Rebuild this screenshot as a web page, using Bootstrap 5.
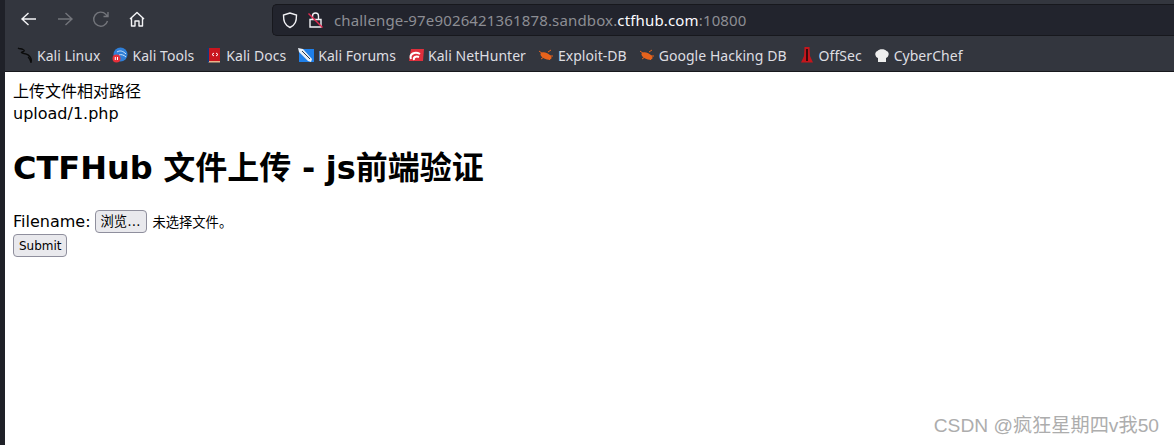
<!DOCTYPE html>
<html lang="zh">
<head>
<meta charset="utf-8">
<title>CTFHub 文件上传 - js前端验证</title>
<link href="https://cdn.jsdelivr.net/npm/bootstrap@5.3.0/dist/css/bootstrap.min.css" rel="stylesheet">
<style>
html,body{height:445px;overflow:hidden;background:#fff}
.shell{height:445px}
.edge{width:5px;background:#1f2128;flex:none}
.mainpane{min-width:0}
.chrome{background:#33363e;height:72px;border-bottom:1px solid #17181d;font-family:"Noto Sans","Noto Sans CJK SC",sans-serif}
.toolrow{height:41px;padding-top:4px}
.navset{width:267px;padding-left:14px;gap:16px;flex:none}
.navbtn{width:20px;height:20px;display:block;flex:none}
.urlbox{height:32px;margin-top:0;background:#22242d;border:1px solid #17181d;border-right:0;border-radius:5px 0 0 5px;padding-left:8px;font-size:15px;color:#8d8e94;white-space:nowrap;letter-spacing:.15px}
.urlbox b{font-weight:400;color:#fbfbfe}
.urlico{flex:none}
.urltext{margin-left:2px}
.markrow{height:28px;padding-left:12px;gap:12px;color:#dedee2;font-size:14px;white-space:nowrap;letter-spacing:.04px}
.markitem{gap:4px}
.markitem svg{flex:none;display:block;width:16px}
.pagebody{padding:8px;font-family:"DejaVu Sans","Noto Sans CJK SC",sans-serif;color:#000;font-size:16px;line-height:19px;position:relative;flex:1}
.pathlabel{font-family:"Noto Sans CJK SC",sans-serif;font-size:16px;line-height:20px;height:23px}
.pathvalue{font-size:16px;line-height:21px;height:21px}
.headline{font-family:"DejaVu Sans","Noto Sans CJK SC",sans-serif;font-weight:700;font-size:32px;line-height:38px;margin:25px 0 23px;color:#000;word-spacing:-.5px}
.fileline{height:23px;margin-bottom:1px;font-size:16px;gap:4px}
.fakebtn{font-family:"DejaVu Sans","Noto Sans CJK SC",sans-serif;font-size:13.3px;line-height:15px;color:#000;background:#e9e9ed;border:1px solid #8f8f9d;border-radius:4px;padding:3px 6px 3px 5px;height:23px}
.nofile{font-family:"Noto Sans CJK SC",sans-serif;font-size:13.3px;margin-left:1px}
.sendbtn{font-size:12px;padding:3px 5px 2px 5px;display:block;width:54px}
.watermark{position:absolute;right:15px;bottom:8px;font-family:"Liberation Sans","Noto Sans CJK SC",sans-serif;font-size:19.2px;line-height:22px;color:#adadad;white-space:nowrap}
</style>
</head>
<body>
<div class="shell d-flex">
  <div class="edge"></div>
  <div class="mainpane flex-grow-1 d-flex flex-column">
    <div class="chrome">
      <div class="toolrow d-flex">
        <div class="navset d-flex align-items-center pb-2">
          <svg class="navbtn" viewBox="0 0 20 20" fill="none" stroke="#f4f4f6" stroke-width="1.4"><path d="M17 10H3M9.500 4 3 10l6.500 6"/></svg>
          <svg class="navbtn" viewBox="0 0 20 20" fill="none" stroke="#73757b" stroke-width="1.4"><path d="M3 10h14M10.500 4 17 10l-6.500 6"/></svg>
          <svg class="navbtn" viewBox="0 0 20 20" fill="none" stroke="#73757b" stroke-width="1.400"><path d="M16.500 12a7 7 0 1 1-1.600-6.600L17 7.500M17 3v4.500h-4.500"/></svg>
          <svg class="navbtn" viewBox="0 0 20 20" fill="none" stroke="#f4f4f6" stroke-width="1.400" stroke-linejoin="round"><path d="M3 10 10 3.500 17 10M4.500 8.500V17h3.500v-5h4v5h3.500V8.500"/></svg>
        </div>
        <div class="urlbox flex-grow-1 d-flex align-items-center gap-2">
          <svg class="urlico" width="18" height="18" viewBox="0 0 18 18" fill="none" stroke="#f0f0f3" stroke-width="1.400"><path d="M9 2 2.500 4c0 6 1 10 6.500 12.500C14.500 14 15.500 10 15.500 4z"/></svg>
          <svg class="urlico" width="17" height="18" viewBox="0 0 17 18" fill="none" stroke="#f0f0f3" stroke-width="1.400"><path d="M5.500 8V5a3 3 0 0 1 6 0v3M3 8.500h11v7.500H3z"/><path d="M1.500 2.500 15.500 16.500" stroke="#e22850"/></svg>
          <span class="urltext">challenge-97e9026421361878.sandbox.<b>ctfhub.com</b>:10800</span>
        </div>
      </div>
      <div class="markrow d-flex align-items-center">
        <span class="markitem d-flex align-items-center">
          <svg height="16" viewBox="0 0 16 16" fill="none" stroke="#0b0b0b" stroke-width="1.300"><path d="M1 1c2 1.500 3 0 5 1.500 2 1 1.500 2-1 2.500-1.500.5 0 1 2 1.500 3 .5 6 2.500 7 5 .5 1.500.5 2.500 0 4-.5-2-1-4-3-5.500"/></svg>
          <span>Kali Linux</span>
        </span>
        <span class="markitem d-flex align-items-center">
          <svg height="16" viewBox="0 0 16 16"><circle cx="8.500" cy="7.500" r="7" fill="#2f7fd8"/><path d="M5 5c3-2 6-1 9 2M7 8c2-1 5 0 7 2" stroke="#cfe4fa" fill="none"/><circle cx="4.500" cy="11.500" r="4" fill="#e8303a"/><path d="M3.300 10v3M5.500 10v3" stroke="#fff"/></svg>
          <span>Kali Tools</span>
        </span>
        <span class="markitem d-flex align-items-center">
          <svg height="16" viewBox="0 0 16 16"><path d="M2 1h12v13H2z" fill="#c9151e"/><path d="M2 14h12v1.500H2z" fill="#e8b48a"/><path d="M1.500 1H3v14.500H1.500z" fill="#123a7a"/><path d="M6 7.500 8 6M6 7.500 8 9M12 7.500 10 6M12 7.500 10 9" stroke="#fff"/></svg>
          <span>Kali Docs</span>
        </span>
        <span class="markitem d-flex align-items-center">
          <svg height="16" viewBox="0 0 16 16"><path d="M1 2h15v13H1z" fill="#1f7fe8"/><path d="M0 1 5 2l9 10-1 3-3-1L1 5z" fill="#e8eef5"/><path d="M4 4l8 8" stroke="#26364a"/></svg>
          <span>Kali Forums</span>
        </span>
        <span class="markitem d-flex align-items-center">
          <svg height="16" viewBox="0 0 16 16"><path d="M3 2h13l-1 12H1z" fill="#df2f3c"/><path d="M3 12c-2-5 4-8 9-5M6 13c-1-3 2-4 5-3" stroke="#fff" stroke-width="2" fill="none"/></svg>
          <span>Kali NetHunter</span>
        </span>
        <span class="markitem d-flex align-items-center">
          <svg height="16" viewBox="0 0 16 16"><ellipse cx="8" cy="9" rx="6" ry="3" transform="rotate(25 8 9)" fill="#e8631c"/><path d="M1 4 5 7M3 12l3-2M10 5l3-2M12 13l-2-2M15 9h-3" stroke="#e8631c"/></svg>
          <span>Exploit-DB</span>
        </span>
        <span class="markitem d-flex align-items-center">
          <svg height="16" viewBox="0 0 16 16"><ellipse cx="8" cy="9" rx="6" ry="3" transform="rotate(25 8 9)" fill="#e8631c"/><path d="M1 4 5 7M3 12l3-2M10 5l3-2M12 13l-2-2M15 9h-3" stroke="#e8631c"/></svg>
          <span>Google Hacking DB</span>
        </span>
        <span class="markitem d-flex align-items-center">
          <svg height="18" viewBox="0 0 16 18"><path d="M5.500 1h5l.5 9 3 6.500H2l3-6.500z" fill="#c4161c"/><path d="M7 3h2v12H7z" fill="#3a0a0c"/></svg>
          <span>OffSec</span>
        </span>
        <span class="markitem d-flex align-items-center">
          <svg height="16" viewBox="0 0 16 16"><path d="M4 11C1 10 0 5 3.500 4 5 1.500 11 1.500 12.500 4 16 5 15 10 12 11v4H4z" fill="#eeeeee"/></svg>
          <span>CyberChef</span>
        </span>
      </div>
    </div>
    <div class="pagebody">
      <div class="pathlabel">上传文件相对路径</div>
      <div class="pathvalue">upload/1.php</div>
      <h1 class="headline">CTFHub 文件上传 - js前端验证</h1>
      <form>
        <div class="fileline d-flex align-items-center">
          <label>Filename:</label>
          <button type="button" class="fakebtn">浏览…</button>
          <span class="nofile">未选择文件。</span>
        </div>
        <button type="button" class="fakebtn sendbtn">Submit</button>
      </form>
      <div class="watermark">CSDN @疯狂星期四v我50</div>
    </div>
  </div>
</div>
<script src="https://cdn.jsdelivr.net/npm/bootstrap@5.3.0/dist/js/bootstrap.bundle.min.js"></script>
</body>
</html>
